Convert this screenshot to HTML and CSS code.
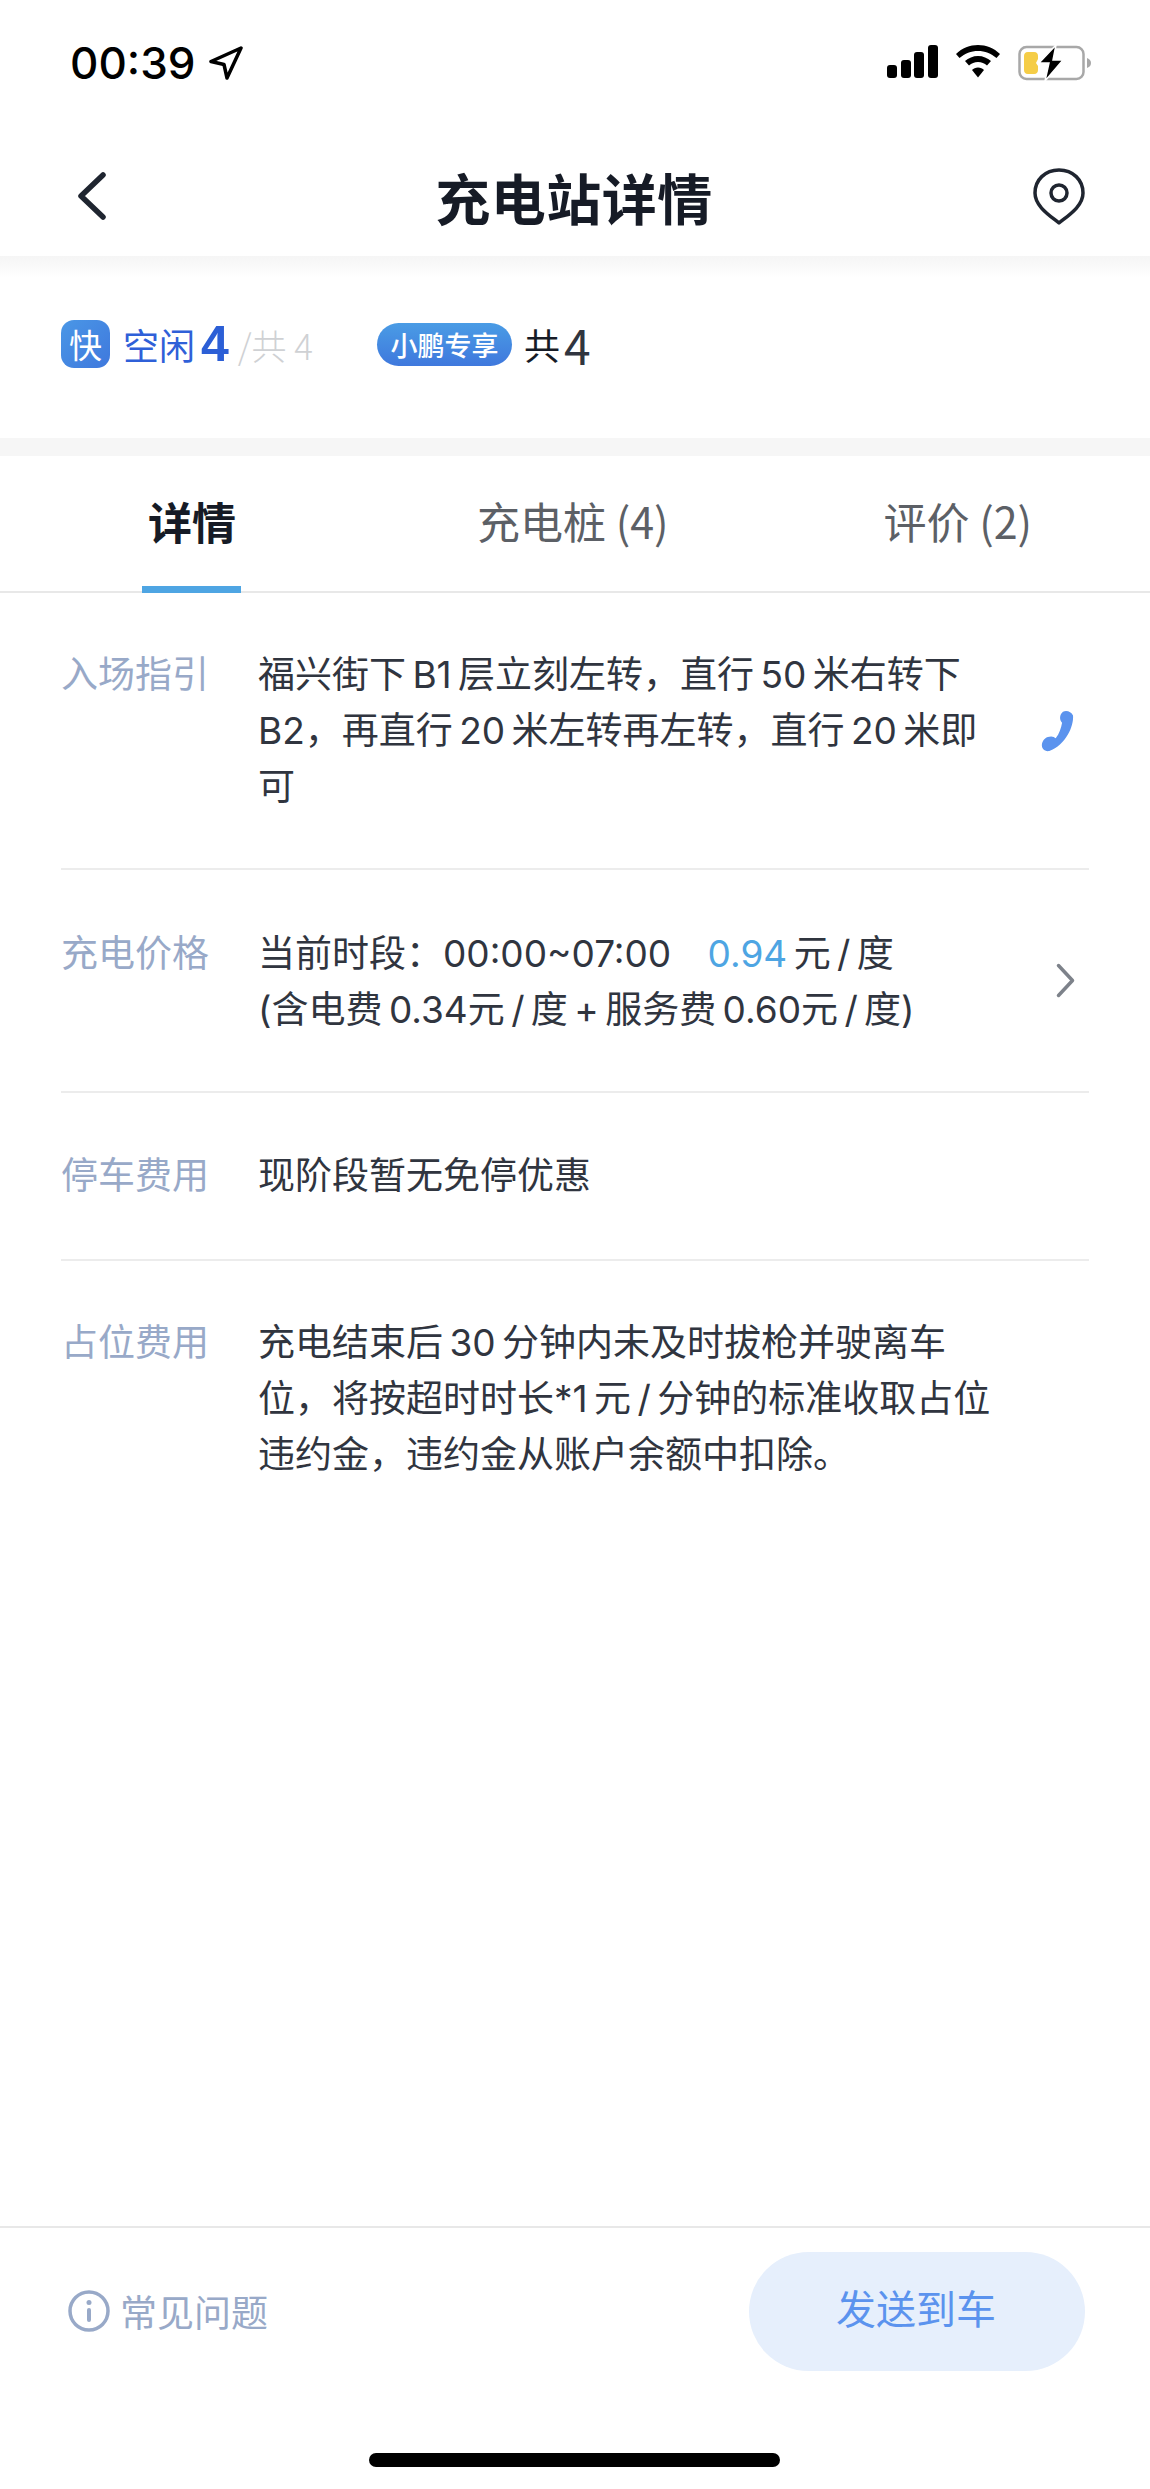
FILE: index.html
```html
<!DOCTYPE html>
<html lang="zh-CN">
<head>
  <meta charset="UTF-8" />
  <title>充电站详情</title>
  <link rel="stylesheet" href="styles.css">
</head>
<body>
<div class="page">

  <div class="statusbar">
    <div class="status-left">
      <span class="time">00:39</span>
      <svg class="arrow" width="34" height="34" viewBox="0 0 34 34"><path d="M32 2 L2 15.500 L15 18.500 L18 32 Z" fill="none" stroke="#000" stroke-width="3.500" stroke-linejoin="round"/></svg>
    </div>
    <div class="status-right">
      <svg width="51" height="33" viewBox="0 0 51 33"><rect x="0" y="20" width="10" height="13" rx="3"/><rect x="14" y="15" width="10" height="18" rx="3"/><rect x="27" y="7" width="10" height="26" rx="3"/><rect x="41" y="0" width="10" height="33" rx="3"/></svg>
      <svg width="44" height="33" viewBox="0 0 44 33"><path d="M22 0 C30 0 38 3 44 9 L40.500 13 C35 8.500 29 6 22 6 C15 6 9 8.500 3.500 13 L0 9 C6 3 14 0 22 0 Z"/><path d="M22 11 C27 11 31.500 13 35 16 L31 20.500 C28.500 18.500 25.500 17 22 17 C18.500 17 15.500 18.500 13 20.500 L9 16 C12.500 13 17 11 22 11 Z"/><path d="M22 22.500 C24.500 22.500 26.500 23.500 28 25 L22 32.500 L16 25 C17.500 23.500 19.500 22.500 22 22.500 Z"/></svg>
      <svg class="battery" width="73" height="36" viewBox="0 0 73 36">
        <rect x="1.500" y="2" width="64" height="32" rx="7" fill="none" stroke="#a8a8a8" stroke-width="2.500"/>
        <path d="M69 13 C72 14 73 16 73 18 C73 20 72 22 69 23 Z" fill="#a8a8a8"/>
        <path d="M10 7 L16 7 C19 7 20 9 20 11 L20 14 L18 18 L20 21 L20 25 C20 27 19 29 16 29 L10 29 C7 29 6 27 6 25 L6 11 C6 9 7 7 10 7 Z" fill="#f5cd47"/>
        <path d="M38 0 L21 18 L31 18 L27 36 L45 15 L35 15 Z" fill="#000" stroke="#fff" stroke-width="1.500"/>
      </svg>
    </div>
  </div>

  <div class="navbar">
    <svg class="nav-back" width="30" height="48" viewBox="0 0 30 48"><path d="M26 3 L4 24 L26 45" fill="none" stroke="#1f2530" stroke-width="5.500" stroke-linecap="round" stroke-linejoin="round"/></svg>
    <h1>充电站详情</h1>
    <svg class="nav-pin" width="52" height="57" viewBox="0 0 52 57"><path d="M26 2 C40 2 50 12 50 25 C50 38 36 47 26 55 C16 47 2 38 2 25 C2 12 12 2 26 2 Z" fill="none" stroke="#1f2530" stroke-width="3.500" stroke-linejoin="round"/><circle cx="26" cy="25" r="8" fill="none" stroke="#1f2530" stroke-width="3.500"/></svg>
  </div>

  <div class="summary">
    <span class="fast-tag">快</span>
    <span class="free">空闲</span>
    <span class="free-num">4</span>
    <span class="total">/共 4</span>
    <span class="brand-tag">小鹏专享</span>
    <span class="brand-total">共</span>
    <span class="brand-num">4</span>
  </div>

  <div class="gap"></div>

  <div class="tabs">
    <div class="tab tab-active">详情</div>
    <div class="tab tab-mid">充电桩 (4)</div>
    <div class="tab tab-last">评价 (2)</div>
  </div>

  <div class="rows">
    <div class="row row-guide">
      <div class="label">入场指引</div>
      <div class="value">福兴街下 B1 层立刻左转，直行 50 米右转下<br>B2，再直行 20 米左转再左转，直行 20 米即<br>可</div>
      <svg class="row-icon" width="35" height="42" viewBox="0 0 36 46"><path d="M24 2 C28 0 33 2 35 6 C36 18 27 38 9 45 C4 46 0 42 1 37 C2 32 6 29 11 29 C13 29 15 30 16 31 C20 26 22 20 23 14 C20 11 20 5 24 2 Z" fill="#5b93ee"/></svg>
    </div>
    <div class="row row-price">
      <div class="label">充电价格</div>
      <div class="value">当前时段：00:00~07:00 <span class="price">0.94</span> 元 / 度<br>(含电费 0.34元 / 度 + 服务费 0.60元 / 度)</div>
      <svg class="row-icon row-chevron" width="19" height="35" viewBox="0 0 19 35"><path d="M2.500 2.500 L16.500 17.500 L2.500 32.500" fill="none" stroke="#7d828a" stroke-width="3.500" stroke-linecap="round" stroke-linejoin="round"/></svg>
    </div>
    <div class="row row-park">
      <div class="label">停车费用</div>
      <div class="value">现阶段暂无免停优惠</div>
    </div>
    <div class="row row-last">
      <div class="label">占位费用</div>
      <div class="value">充电结束后 30 分钟内未及时拔枪并驶离车<br>位，将按超时时长*1 元 / 分钟的标准收取占位<br>违约金，违约金从账户余额中扣除。</div>
    </div>
  </div>

  <div class="footer">
    <div class="faq">
      <svg width="42" height="42" viewBox="0 0 42 42"><circle cx="21" cy="21" r="19" fill="none" stroke="#98a9c8" stroke-width="3.500"/><circle cx="21" cy="12.500" r="2.500" fill="#98a9c8"/><rect x="19" y="18" width="4" height="14" rx="2" fill="#98a9c8"/></svg>
      <span>常见问题</span>
    </div>
    <div class="send-btn">发送到车</div>
  </div>

  <div class="home-bar"></div>
</div>
</body>
</html>
```

FILE: styles.css
```css
* {
  box-sizing: border-box;
}
html, body {
  margin: 0;
  padding: 0;
  background: #fff;
}
body {
  font-family: "Noto Sans CJK SC", "Noto Sans", sans-serif;
  color: #30353f;
}
.page {
  width: 1150px;
  height: 2489px;
  display: flex;
  flex-direction: column;
  overflow: hidden;
}
.statusbar {
  height: 136px;
  padding: 45px 59px 0 70px;
  display: flex;
  justify-content: space-between;
  align-items: flex-start;
}
.status-left {
  display: flex;
  align-items: center;
  gap: 14px;
  height: 36px;
}
.time {
  font-family: Inter, "Liberation Sans", sans-serif;
  font-size: 44px;
  line-height: 36px;
  font-weight: 500;
  color: #000;
}
.status-right {
  display: flex;
  align-items: flex-start;
  gap: 18px;
}
.navbar {
  height: 120px;
  padding: 0 65px 0 77px;
  display: flex;
  justify-content: space-between;
  align-items: center;
  position: relative;
}
.navbar::after {
  content: "";
  position: absolute;
  left: 0;
  right: 0;
  top: 100%;
  height: 22px;
  background: linear-gradient(180deg, #f5f5f5, #fff);
}
.navbar h1 {
  margin: 0 0 0 8px;
  font-size: 55px;
  letter-spacing: 0.5px;
  font-weight: 700;
  color: #161b26;
  line-height: 1;
}
.summary {
  height: 182px;
  padding: 0 0 6px 61px;
  display: flex;
  align-items: center;
}
.fast-tag {
  width: 49px;
  height: 48px;
  border-radius: 13px;
  background: linear-gradient(135deg, #4a97e6, #3f78dd);
  color: #fff;
  font-size: 33px;
  display: flex;
  align-items: center;
  justify-content: center;
}
.free {
  margin-left: 13px;
  font-size: 36px;
  color: #2f60d8;
}
.free-num {
  margin-left: 6px;
  font-family: "Liberation Sans", sans-serif;
  font-weight: 700;
  font-size: 50px;
  color: #2c5fd6;
}
.total {
  margin-left: 9px;
  font-size: 35px;
  font-weight: 200;
  color: #cfd1d4;
}
.brand-tag {
  margin-left: 64px;
  width: 135px;
  height: 43px;
  border-radius: 22px;
  background: linear-gradient(180deg, #4a9ce5, #3f78dd);
  color: #fff;
  font-size: 27px;
  font-weight: 500;
  display: flex;
  align-items: center;
  justify-content: center;
}
.brand-total {
  margin-left: 12px;
  font-size: 36px;
  color: #161b26;
}
.brand-num {
  margin-left: 4px;
  font-size: 48px;
  color: #30353f;
}
.gap {
  height: 18px;
  background: #f6f6f6;
}
.tabs {
  height: 137px;
  position: relative;
  border-bottom: 2px solid #e8e8e8;
  font-size: 43px;
  color: #5c6066;
  display: flex;
  align-items: center;
}
.tab {
  line-height: 1;
  padding-bottom: 6px;
}
.tab-active {
  margin-left: 148px;
  font-size: 44px;
  font-weight: 700;
  color: #161b26;
}
.tab-active::after {
  content: "";
  position: absolute;
  left: 142px;
  bottom: -2px;
  width: 99px;
  height: 7px;
  background: #4ea5e3;
}
.tab-mid {
  margin-left: 241px;
}
.tab-last {
  margin-left: 215px;
}
.rows {
  flex: 1;
  padding: 0 61px;
}
.row {
  display: flex;
  border-bottom: 2px solid #ececec;
  font-size: 37px;
  line-height: 56px;
  position: relative;
}
.row-guide {
  height: 277px;
  padding-top: 51px;
}
.row-price {
  height: 223px;
  padding-top: 53px;
}
.row-park {
  height: 168px;
  padding-top: 52px;
}
.row-last {
  border-bottom: 0;
  padding-top: 51px;
}
.label {
  width: 197px;
  flex: none;
  color: #98a9c8;
}
.value {
  font-family: Inter, "Noto Sans CJK SC", sans-serif;
  color: #30353f;
  white-space: nowrap;
  word-spacing: -4px;
  margin-top: 3px;
}
.price {
  margin-left: 30px;
  color: #4ea5e3;
}
.row-icon {
  position: absolute;
  right: 14px;
  top: 117px;
}
.row-chevron {
  top: 93px;
}
.footer {
  height: 227px;
  flex: none;
  border-top: 2px solid #e8e8e8;
  padding: 24px 65px 0 68px;
  display: flex;
  justify-content: space-between;
  align-items: flex-start;
}
.faq {
  display: flex;
  align-items: center;
  gap: 10px;
  margin-top: 38px;
  font-size: 37px;
  line-height: 42px;
  color: #98a9c8;
}
.send-btn {
  width: 336px;
  height: 119px;
  border-radius: 60px;
  background: #e6effc;
  color: #5b93ee;
  font-size: 40px;
  display: flex;
  align-items: center;
  justify-content: center;
  padding: 0 2px 10px 0;
}
.home-bar {
  height: 14px;
  width: 411px;
  margin: 0 0 22px 369px;
  background: #000;
  border-radius: 7px;
  flex: none;
}
```
